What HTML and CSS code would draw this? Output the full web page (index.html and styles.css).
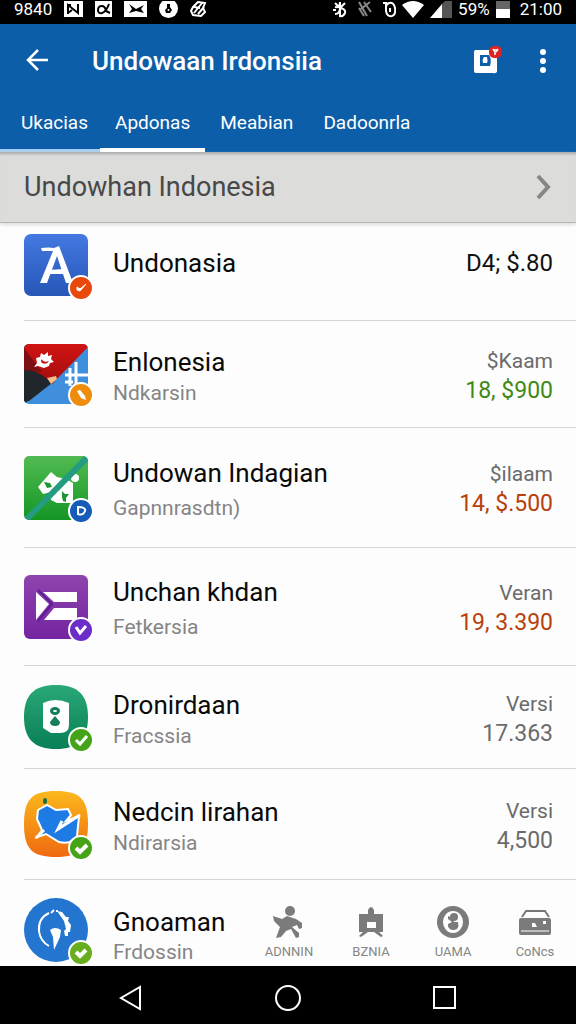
FILE: index.html
```html
<!DOCTYPE html>
<html lang="id">
<head>
<meta charset="utf-8">
<meta name="viewport" content="width=device-width, initial-scale=1">
<title>Undowaan Irdonsiia</title>
<link rel="stylesheet" href="styles.css">
</head>
<body>
<div class="screen">
  <div class="status">
    <div class="status-group status-left">
      <span>9840</span>
      <svg width="19" height="16" viewBox="0 0 19 16"><rect width="19" height="16" fill="#fff"/><path d="M4 13V4l10 8V3M3 4h4M4 12l4-3" fill="none" stroke="#000" stroke-width="2"/></svg>
      <svg width="17" height="16" viewBox="0 0 17 16"><rect width="17" height="16" fill="#fff"/><path d="M14 3C10 14 3 14 3 9s7-6 8 1l4 2" fill="none" stroke="#000" stroke-width="2"/></svg>
      <svg width="23" height="16" viewBox="0 0 23 16"><rect width="23" height="16" fill="#fff"/><path d="M5 3l7 5 8-4-3 4 3 4-8-2-7 2 3-4z" fill="#000"/></svg>
      <svg width="19" height="17" viewBox="0 0 19 17"><circle cx="9.500" cy="7.500" r="9.500" fill="#fff"/><path d="M8 3h3v3l2 3-2 3H7L6 9l2-2z" fill="#000"/><circle cx="9.500" cy="9" r="1" fill="#fff"/></svg>
      <svg width="17" height="16" viewBox="0 0 17 16"><path d="M3 6l5-5 7 1-2 5 2 4-4 4-8-1-2-4zM4 12l8-10M8 13l6-7M4 6l6 1" fill="none" stroke="#fff" stroke-width="2"/></svg>
    </div>
    <div class="status-group status-right">
      <svg width="16" height="17" viewBox="0 0 16 17"><path d="M3 2l5 5 5-5M3 6q5 1 5-5v15M3 13q5 0 5-6 6 1 5 5-2 4-5 3M1 9h3" fill="none" stroke="#fff" stroke-width="2"/></svg>
      <svg width="14" height="16" viewBox="0 0 14 16"><path d="M1 1l8 14M1 7l5 8M6 1l7 10M3 8l9-7" fill="none" stroke="#888" stroke-width="2"/></svg>
      <svg width="14" height="17" viewBox="0 0 14 17"><path d="M1 2h3v8q1 6 6 5 4-1 3-8-1-6-6-5-3 1-3 4M8 7v4" fill="none" stroke="#fff" stroke-width="2"/></svg>
      <svg width="22" height="17" viewBox="0 0 22 17"><path d="M0 4Q11-4 22 4L11 17z" fill="#fff"/></svg>
      <svg width="22" height="17" viewBox="0 0 22 17"><path d="M0 17L12 3v14z" fill="#fff"/><path d="M12 3l3-3h7v17H12z" fill="#555"/></svg>
      <span>59%</span>
      <svg width="14" height="17" viewBox="0 0 14 17"><rect width="14" height="8" fill="#666"/><rect y="8" width="14" height="9" fill="#fff"/></svg>
      <span class="clock">21:00</span>
    </div>
  </div>

  <header class="appbar">
    <div class="toolbar">
      <button class="icon-btn" aria-label="Back"><svg width="24" height="24" viewBox="0 0 24 24"><path d="M23 11H3M13 1L3 11l10 10" fill="none" stroke="#fff" stroke-width="2.500"/></svg></button>
      <h1 class="title">Undowaan Irdonsiia</h1>
      <button class="icon-btn" aria-label="Notifications"><svg width="32" height="30" viewBox="0 0 32 30"><path d="M4 4h22v22q-2 2-4 1H5q-2 0-2-2V6q0-1 1-2z" fill="#fff"/><path d="M9 9h9q3 5 1 11H9z" fill="#0d5ea8"/><path d="M13 11h3q1 4 0 6h-4q-1-4 1-6z" fill="#fff"/><rect x="18" y="0" width="13" height="12" rx="5" fill="#dc2424"/><path d="M22 3l2 3v3M27 3l-2 3M22 4h5" stroke="#fff" stroke-width="1.500" fill="none"/></svg></button>
      <button class="icon-btn more" aria-label="More"><svg width="8" height="24" viewBox="0 0 8 24" fill="#fff"><circle cx="4" cy="3" r="3"/><circle cx="4" cy="12" r="3"/><circle cx="4" cy="21" r="3"/></svg></button>
    </div>
    <nav class="tabs">
      <a class="tab visited" href="#ukacias">Ukacias</a>
      <a class="tab active" href="#apdonas">Apdonas</a>
      <a class="tab" href="#meabian">Meabian</a>
      <a class="tab" href="#dadoonrla">Dadoonrla</a>
    </nav>
  </header>

  <a class="section" href="#all">
    <span>Undowhan Indonesia</span>
    <svg width="16" height="26" viewBox="0 0 16 26"><path d="M2 2l10 11L2 24" fill="none" stroke="#858585" stroke-width="4"/></svg>
  </a>

  <main class="list">
    <article class="row first">
      <div class="icon">
        <svg width="64" height="64" viewBox="0 0 64 64"><defs><linearGradient id="g1" x1="0" y1="0" x2="0" y2="1"><stop offset="0" stop-color="#4379e0"/><stop offset="1" stop-color="#2856b8"/></linearGradient></defs><rect y="1" width="64" height="62" rx="7" fill="url(#g1)"/><path d="M17 15q8-1 13 0l5-2 14 37h-7L33 23 23 50h-7l13-32H18z" fill="#fff"/><path d="M24 37l16-1v5H23z" fill="#fff"/></svg>
        <svg class="badge" viewBox="0 0 26 26"><circle cx="13" cy="13" r="12" fill="#e8480c" stroke="#fff" stroke-width="2"/><path d="M9 12l3 2 6-5-6 7-3-1z" fill="#fff" stroke="#fff"/></svg>
      </div>
      <div class="text"><h2>Undonasia</h2></div>
      <div class="meta"><strong class="price">D4; $.80</strong></div>
    </article>

    <article class="row second">
      <div class="icon">
        <svg width="64" height="60" viewBox="0 0 64 60"><defs><clipPath id="c2"><rect width="64" height="60" rx="5"/></clipPath><linearGradient id="g2" x1="0" y1="0" x2="0" y2="1"><stop offset="0" stop-color="#d01414"/><stop offset="1" stop-color="#a40c0c"/></linearGradient></defs><g clip-path="url(#c2)"><rect width="64" height="60" fill="#3f8fdc"/><path d="M46 24v18M52 18v25M41 31h23M41 38h8" stroke="#fff" stroke-width="3"/><path d="M0 0v60L30 36V20z" fill="#20262c"/><path d="M0 0h64v3L28 40 0 20z" fill="url(#g2)"/><path d="M0 4v24h18z" fill="#7c1014"/><path d="M0 26q12 0 22 8l6 5L5 57H0z" fill="#20262c"/><path d="M23 34l9-2 1 3-6 5z" fill="#f5bc8c"/><path d="M12 14l4-1 1-4 3 2 4-3v4l4-1-1 4 3 3-4 1-1 3-5 2-6-2-4 1 3-4z" fill="#fff"/><path d="M18 15q1 4 7 2-2 4-7 2-2-2 0-4z" fill="#c01414"/></g></svg>
        <svg class="badge" viewBox="0 0 26 26"><circle cx="13" cy="13" r="12" fill="#ee8c0c" stroke="#fff" stroke-width="2"/><path d="M9 9l3-1 5 6 1 4-5-2z" fill="#fff"/></svg>
      </div>
      <div class="text"><h2>Enlonesia</h2><p>Ndkarsin</p></div>
      <div class="meta"><span>$Kaam</span><strong class="up">18, $900</strong></div>
    </article>

    <article class="row third">
      <div class="icon">
        <svg width="64" height="64" viewBox="0 0 64 64"><defs><clipPath id="c3"><rect width="64" height="64" rx="5"/></clipPath><linearGradient id="g3" x1="0" y1="0" x2="0" y2="1"><stop offset="0" stop-color="#52bb52"/><stop offset="1" stop-color="#149624"/></linearGradient></defs><g clip-path="url(#c3)"><rect width="64" height="64" fill="url(#g3)"/><path d="M14 31l13-15 6 5 9 2 7 4v20H33l-6-3v-8l-8 2z" fill="#fff"/><circle cx="51" cy="22" r="4" fill="#fff"/><path d="M20 26l6 1 2 4-5 1zM38 35l3 3h4l-3 4v4l-3-1-1-4z" fill="#1b9636"/><path d="M0 62L60 0l6 3L5 65z" fill="#239c80"/></g></svg>
        <svg class="badge" viewBox="0 0 26 26"><circle cx="13" cy="13" r="12" fill="#165bb8" stroke="#fff" stroke-width="2"/><path d="M10 9q8 0 7 4-2 5-7 3z" fill="none" stroke="#fff" stroke-width="2"/></svg>
      </div>
      <div class="text"><h2>Undowan Indagian</h2><p>Gapnnrasdtn)</p></div>
      <div class="meta"><span>$ilaam</span><strong class="down">14, $.500</strong></div>
    </article>

    <article class="row fourth">
      <div class="icon">
        <svg width="64" height="64" viewBox="0 0 64 64"><defs><linearGradient id="g4" x1="0" y1="0" x2="0" y2="1"><stop offset="0" stop-color="#8e44ad"/><stop offset="1" stop-color="#7424a0"/></linearGradient></defs><rect width="64" height="64" rx="6" fill="url(#g4)"/><path d="M12 17l13 12-13 16zM19 17h34v10H30zM30 33h23v12H20z" fill="#fff"/><path d="M14 15l14 14-14 17" fill="none" stroke="#5d1c98" stroke-width="2"/></svg>
        <svg class="badge" viewBox="0 0 26 26"><circle cx="13" cy="13" r="12" fill="#6c2cc8" stroke="#fff" stroke-width="2"/><path d="M8 10l4 6 6-7" fill="none" stroke="#fff" stroke-width="3"/></svg>
      </div>
      <div class="text"><h2>Unchan khdan</h2><p>Fetkersia</p></div>
      <div class="meta"><span>Veran</span><strong class="down">19, 3.390</strong></div>
    </article>

    <article class="row fifth">
      <div class="icon">
        <svg width="64" height="64" viewBox="0 0 64 64"><defs><linearGradient id="g5" x1="0" y1="0" x2="0" y2="1"><stop offset="0" stop-color="#2aa877"/><stop offset="1" stop-color="#087f56"/></linearGradient></defs><path d="M32 0C54 0 64 10 64 32S54 64 32 64 0 54 0 32 10 0 32 0z" fill="url(#g5)"/><path d="M19 18q12-6 26 0v22q0 8-9 8h-9l-8-5z" fill="#fff"/><ellipse cx="31" cy="26" rx="5" ry="4" fill="#137e5c"/><path d="M31 31l5 6q0 4-5 4t-5-4z" fill="#137e5c"/><ellipse cx="31" cy="26" rx="2" ry="1" fill="#fff"/></svg>
        <svg class="badge" viewBox="0 0 26 26"><circle cx="13" cy="13" r="12" fill="#45a318" stroke="#fff" stroke-width="2"/><path d="M8 13l4 4 7-8" fill="none" stroke="#fff" stroke-width="3"/></svg>
      </div>
      <div class="text"><h2>Dronirdaan</h2><p>Fracssia</p></div>
      <div class="meta"><span>Versi</span><strong>17.363</strong></div>
    </article>

    <article class="row sixth">
      <div class="icon">
        <svg width="64" height="66" viewBox="0 0 64 66"><defs><linearGradient id="g6" x1="0" y1="0" x2="0" y2="1"><stop offset="0" stop-color="#fbb81c"/><stop offset="1" stop-color="#ef6a10"/></linearGradient></defs><path d="M32 0C56 0 64 8 64 33S56 66 32 66 0 58 0 33 8 0 32 0z" fill="url(#g6)"/><path d="M14 19l9-5 9 5 12-1 3 6-5 6 13-5-2 20q-6 9-18 6l-13-8-9 3 5-7-5-11z" fill="#1f7be4" stroke="#fff" stroke-width="2"/><path d="M56 24L34 38l4-8M20 39l-8 8" fill="none" stroke="#fff" stroke-width="3"/><ellipse cx="21" cy="10" rx="2" ry="3" fill="#197044"/></svg>
        <svg class="badge" viewBox="0 0 26 26"><circle cx="13" cy="13" r="12" fill="#45a318" stroke="#fff" stroke-width="2"/><path d="M8 13l4 4 7-7" fill="none" stroke="#fff" stroke-width="4"/></svg>
      </div>
      <div class="text"><h2>Nedcin lirahan</h2><p>Ndirarsia</p></div>
      <div class="meta"><span>Versi</span><strong>4,500</strong></div>
    </article>

    <article class="row last">
      <div class="icon">
        <svg width="64" height="64" viewBox="0 0 64 64"><circle cx="32" cy="32" r="32" fill="#2375d0"/><path d="M25 15Q14 20 15 33q1 10 10 15" fill="none" stroke="#fff" stroke-width="2"/><path d="M27 15l3-3M32 13h2" stroke="#fff" stroke-width="2"/><path d="M33 13l5 1 4 5h3l-1 4 3 4-1 7h-2v4h-3l-1-5 2-2-2-8z" fill="#fff"/><path d="M26 32q5-4 11 0l-1 7-6 13-1-13z" fill="#fff"/></svg>
        <svg class="badge" viewBox="0 0 26 26"><circle cx="13" cy="13" r="12" fill="#68ae1c" stroke="#fff" stroke-width="2"/><path d="M8 12l4 4 6-6" fill="none" stroke="#fff" stroke-width="4"/></svg>
      </div>
      <div class="text"><h2>Gnoaman</h2><p>Frdossin</p></div>
      <nav class="bottom">
        <a href="#admin"><svg width="34" height="34" viewBox="0 0 34 34" fill="#7b7b7b"><circle cx="18" cy="6" r="5"/><path d="M1 11l9 3 5-3 9 3 6 4v5l-3 1-2-4-5 2 7 6v4l-3 1-5-9-5 2-5 6-5 1 4-11-6-6z"/></svg>ADNNIN</a>
        <a href="#bznia"><svg width="34" height="34" viewBox="0 0 34 34"><path d="M5 9h9V5q3-6 6 0v4h9v18h-4l4 4-2 1-7-5h-6l-7 5-2-1 4-4H5z" fill="#7b7b7b"/><rect x="13" y="17" width="9" height="6" fill="#fff"/></svg>BZNIA</a>
        <a href="#uama"><svg width="34" height="34" viewBox="0 0 34 34"><circle cx="17" cy="17" r="16" fill="#7b7b7b"/><ellipse cx="17" cy="17" rx="10" ry="11" fill="#fff"/><circle cx="18" cy="12" r="4" fill="#7b7b7b"/><path d="M12 11l5 2 1 4h4q2 9-6 8-5-2-4-6l4-2-4-3z" fill="#7b7b7b"/></svg>UAMA</a>
        <a href="#conces"><svg width="34" height="34" viewBox="0 0 34 34"><path d="M4 12l4-6h19l4 6" fill="none" stroke="#777" stroke-width="2"/><rect x="1" y="13" width="32" height="17" rx="2" fill="#7b7b7b"/><path d="M3 26h28" stroke="#fff" stroke-width="1"/><path d="M14 18h3l2 4h-5zM25 16h3v3h-3z" fill="#fff"/></svg>CoNcs</a>
      </nav>
    </article>
  </main>

  <div class="system">
    <button aria-label="System back"><svg width="26" height="28" viewBox="0 0 26 28"><path d="M22 3v22L3 14z" fill="none" stroke="#fff" stroke-width="2"/></svg></button>
    <button aria-label="Home"><svg width="28" height="28" viewBox="0 0 28 28"><circle cx="14" cy="14" r="12" fill="none" stroke="#fff" stroke-width="2"/></svg></button>
    <button aria-label="Recent apps"><svg width="24" height="24" viewBox="0 0 24 24"><rect x="1" y="1" width="21" height="21" fill="none" stroke="#fff" stroke-width="2"/></svg></button>
  </div>
</div>
</body>
</html>
```
FILE: styles.css
```css
* { box-sizing: border-box; }
body { margin: 0; background: #fdfdfd; color: #0a0a0a; font-family: Roboto, "Noto Sans", sans-serif; }
h1, h2, p { margin: 0; font-weight: 400; }
a { color: inherit; text-decoration: none; }
button { display: flex; align-items: center; justify-content: center; padding: 0; border: 0; background: none; }
svg { display: block; }

.screen { display: flex; flex-direction: column; min-height: 100vh; }

.status { display: flex; justify-content: space-between; height: 24px; padding: 0 14px; background: #000; color: #fff; font-size: 17px; line-height: 18px; }
.status-group { display: flex; align-items: center; height: 18px; }
.status-left { gap: 12px; }
.status-right { gap: 6px; }
.status-right svg:nth-child(-n+2) { margin-right: 4px; }
.clock { margin-left: 4px; }

.appbar { background: #0d5ea8; color: #fff; }
.toolbar { display: flex; align-items: center; height: 72px; padding: 2px 25px 0; }
.title { flex: 1; padding-left: 43px; font-size: 26px; font-weight: 500; line-height: 32px; }
.more { padding: 0 4px 0 36px; }
.tabs { display: flex; height: 56px; }
.tab { display: flex; align-items: center; padding: 2px 15px 0; border-bottom: 4px solid transparent; font-size: 19px; line-height: 24px; }
.visited { padding: 1px 12px 0 21px; border-bottom: 3px solid #a9cdf0; }
.active { border-bottom: 4px solid #fff; }

.section { display: flex; align-items: center; justify-content: space-between; height: 71px; padding: 0 24px; border-bottom: 1px solid #b8b8b8; background: #dcdcdb; box-shadow: inset 0 4px 3px -2px #aaa, 0 2px 3px #ddd; color: #484848; font-size: 27px; }

.list { display: flex; flex: 1; flex-direction: column; }
.row { display: flex; align-items: center; margin-left: 24px; padding-right: 23px; border-bottom: 1px solid #d6d6d6; }
.icon { position: relative; flex: none; width: 64px; }
.badge { position: absolute; right: -6px; bottom: -4px; width: 26px; height: 26px; }
.text { display: flex; flex: 1; flex-direction: column; padding: 5px 0 0 25px; }
.text h2 { font-size: 26px; line-height: 32px; }
.text p { color: #858585; font-size: 21px; line-height: 30px; }
.meta { display: flex; flex-direction: column; align-items: flex-end; padding-top: 3px; color: #6b6b6b; font-size: 21px; line-height: 30px; }
.meta strong { font-size: 23px; font-weight: 400; }
.meta .price { color: #111; font-size: 24px; }
.meta .up { color: #3f8a14; }
.meta .down { color: #b8400a; }

.first { min-height: 98px; padding-bottom: 14px; }
.first .text, .first .meta { padding-top: 0; padding-bottom: 4px; }
.second { min-height: 107px; }
.third { min-height: 120px; }
.fourth { min-height: 118px; }
.fifth { min-height: 103px; }
.sixth { min-height: 111px; }
.third .text, .fourth .text { gap: 4px; }
.last { flex: 1; align-items: flex-start; min-height: 85px; padding: 18px 0 0; border-bottom: 0; overflow: hidden; }
.last .text { flex: none; width: 160px; padding-top: 8px; }
.last .text p { line-height: 28px; }
.bottom { display: grid; flex: 1; grid-template-columns: repeat(4, 1fr); padding-top: 7px; }
.bottom a { display: flex; flex-direction: column; align-items: center; gap: 5px; color: #858585; font-size: 13px; line-height: 16px; }

.system { display: grid; grid-template-columns: repeat(3, 1fr); height: 59px; padding: 5px 52px 0; background: #000; }
```
